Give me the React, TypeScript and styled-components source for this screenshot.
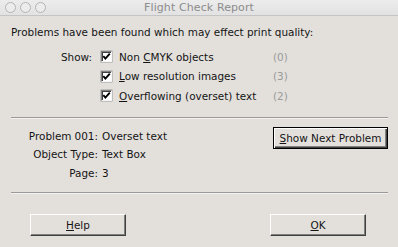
import { Fragment } from 'react';
import styled, { createGlobalStyle } from 'styled-components';

const GlobalStyle = createGlobalStyle`
  html, body {
    margin: 0;
    padding: 0;
    background: #e3e0dc;
  }
`;

const colors = {
  face: '#e3e0dc',
  text: '#141414',
  muted: '#9a9a9a',
  shadow: '#808080',
  darkShadow: '#404040',
  light: '#ffffff',
};

const Window = styled.div`
  width: 398px;
  height: 247px;
  background: ${colors.face};
  font-family: 'DejaVu Sans', Verdana, sans-serif;
  font-size: 10.45px;
  color: ${colors.text};
  display: flex;
  flex-direction: column;
  overflow: hidden;
`;

const TitleBar = styled.div`
  height: 15px;
  display: grid;
  grid-template-columns: 1fr auto 1fr;
  align-items: center;
  background: linear-gradient(#ececec, #e2e2e2);
  border-bottom: 1px solid #c4c4c4;
`;

const Lights = styled.div`
  display: flex;
  gap: 4px;
  padding-left: 5px;
`;

const Light = styled.span`
  width: 9px;
  height: 9px;
  border-radius: 50%;
  border: 1.5px solid #b4b4b4;
  background: #ececec;
`;

const Title = styled.div`
  font-size: 11px;
  color: #8c8c8c;
  letter-spacing: 0.1px;
`;

const Content = styled.div`
  display: flex;
  flex-direction: column;
  padding: 9px 10px 0 11px;
`;

const Intro = styled.div`
  line-height: 14px;
`;

const ShowGrid = styled.div`
  display: grid;
  grid-template-columns: 81px 20px 161px auto;
  grid-auto-rows: 19.5px;
  align-items: center;
  margin-top: 8px;
`;

const ShowLabel = styled.div`
  text-align: right;
`;

const Box = styled.span`
  width: 11px;
  height: 11px;
  margin-left: 9px;
  box-sizing: border-box;
  background: #fff;
  border-top: 1px solid ${colors.shadow};
  border-left: 1px solid ${colors.shadow};
  border-right: 1px solid #f6f6f6;
  border-bottom: 1px solid #f6f6f6;
  box-shadow: inset 1px 1px 0 ${colors.darkShadow}, 0 0 0 0.5px #9a9a9a;
  display: flex;
  align-items: center;
  justify-content: center;
`;

const OptionText = styled.span`
  padding-left: 7px;
  white-space: nowrap;
`;

const Count = styled.span`
  color: ${colors.muted};
`;

const Separator = styled.div<{ $top: number }>`
  height: 1px;
  background: #9c9a98;
  border-bottom: 1px solid #f4f2f0;
  margin-top: ${({ $top }) => $top}px;
`;

const ProblemRow = styled.div`
  display: flex;
  justify-content: space-between;
  align-items: flex-start;
  margin-top: 8px;
`;

const Details = styled.div`
  display: grid;
  grid-template-columns: 87px auto;
  column-gap: 4px;
  grid-auto-rows: 18.5px;
  align-items: center;
`;

const DetailLabel = styled.span`
  display: flex;
  justify-content: flex-end;
  gap: 3px;
  white-space: nowrap;
`;

const Button = styled.button<{ $width: number; $default?: boolean }>`
  width: ${({ $width }) => $width}px;
  height: 22px;
  box-sizing: border-box;
  font-family: inherit;
  font-size: 10.45px;
  color: ${colors.text};
  background: ${colors.face};
  padding: 0;
  white-space: nowrap;
  border-style: solid;
  border-width: 1px;
  border-color: ${({ $default }) =>
    $default
      ? '#000'
      : `${colors.light} ${colors.darkShadow} ${colors.darkShadow} ${colors.light}`};
  box-shadow: ${({ $default }) =>
    $default
      ? `inset 1px 1px 0 ${colors.light}, inset -1px -1px 0 ${colors.darkShadow}, inset -2px -2px 0 ${colors.shadow}`
      : `inset -1px -1px 0 ${colors.shadow}`};
`;

const Footer = styled.div`
  display: flex;
  justify-content: space-between;
  padding: 20px 32px 0 30px;
`;

const Check = () => (
  <Box>
    <svg width="9" height="9" viewBox="0 0 9 9">
      <path d="M1.3 4.2 L3.4 6.6 L7.8 1.6" stroke="#000" strokeWidth="1.9" fill="none" />
    </svg>
  </Box>
);

const options = [
  { pre: 'Non ', key: 'C', post: 'MYK objects', count: 0 },
  { pre: '', key: 'L', post: 'ow resolution images', count: 3 },
  { pre: '', key: 'O', post: 'verflowing (overset) text', count: 2 },
];

const App = () => (
  <Window>
    <GlobalStyle />
    <TitleBar>
      <Lights>
        <Light />
        <Light />
        <Light />
      </Lights>
      <Title>Flight Check Report</Title>
      <div />
    </TitleBar>
    <Content>
      <Intro>Problems have been found which may effect print quality:</Intro>
      <ShowGrid>
        {options.map((o, i) => (
          <Fragment key={o.key}>
            <ShowLabel>{i === 0 ? 'Show:' : ''}</ShowLabel>
            <Check />
            <OptionText>
              {o.pre}
              <u>{o.key}</u>
              {o.post}
            </OptionText>
            <Count>({o.count})</Count>
          </Fragment>
        ))}
      </ShowGrid>
      <Separator $top={11} />
      <ProblemRow>
        <Details>
          <DetailLabel>
            <span>Problem</span>
            <span>001:</span>
          </DetailLabel>
          <span>Overset text</span>
          <DetailLabel>Object Type:</DetailLabel>
          <span>Text Box</span>
          <DetailLabel>Page:</DetailLabel>
          <span>3</span>
        </Details>
        <Button $width={115} $default>
          <u>S</u>how Next Problem
        </Button>
      </ProblemRow>
      <Separator $top={10} />
    </Content>
    <Footer>
      <Button $width={96}>
        <u>H</u>elp
      </Button>
      <Button $width={96}>
        <u>O</u>K
      </Button>
    </Footer>
  </Window>
);

export default App;
